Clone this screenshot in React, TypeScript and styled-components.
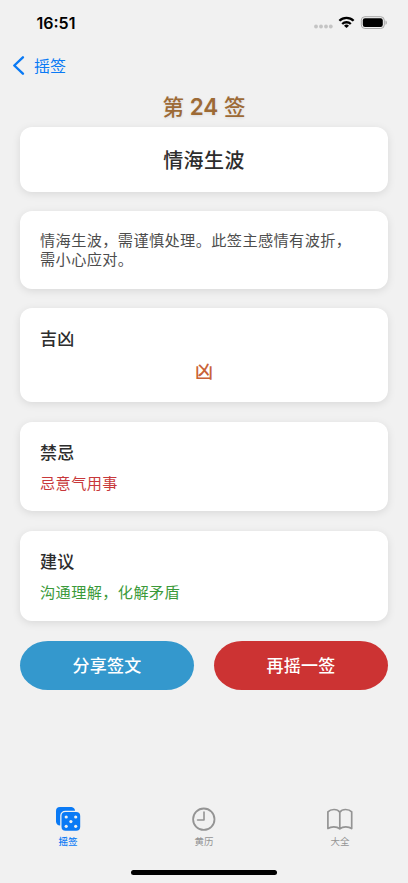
import React from 'react';
import styled, { createGlobalStyle } from 'styled-components';

const fontStack = 'Inter, "Noto Sans CJK SC", sans-serif';

const GlobalStyle = createGlobalStyle`
  * { box-sizing: border-box; }
  html, body { margin: 0; padding: 0; background: #f1f1f1; }
  body { font-family: ${fontStack}; }
`;

const Screen = styled.div`
  width: 408px;
  height: 883px;
  overflow: hidden;
  display: flex;
  flex-direction: column;
  background: #f1f1f1;
`;

const StatusBar = styled.header`
  height: 44px;
  flex: none;
  display: flex;
  justify-content: space-between;
  padding: 0 20px 0 36.5px;
`;

const Clock = styled.time`
  margin-top: 13px;
  font-size: 16px;
  line-height: 20px;
  font-weight: 600;
  color: #000;
`;

const StatusIcons = styled.div`
  display: flex;
  height: 44px;
`;

const NavBar = styled.nav`
  height: 43px;
  flex: none;
  padding-left: 12px;
`;

const BackButton = styled.button`
  height: 43px;
  padding: 0;
  border: 0;
  background: none;
  display: flex;
  align-items: center;
  gap: 9px;
  color: #0a7af5;
  font-family: ${fontStack};
  font-size: 16px;
  line-height: 20px;
`;

const Title = styled.h1`
  margin: 5px 0 0;
  height: 35px;
  flex: none;
  text-align: center;
  color: #9d6a35;
  font-size: 21.5px;
  line-height: 30px;
  font-weight: 500;
  text-shadow: 0 1px 3px rgba(0, 0, 0, 0.1);
`;

const TitleNumber = styled.span`
  font-size: 22.5px;
  font-weight: 600;
`;

const Content = styled.main`
  flex: 1;
  padding: 0 20px;
`;

const Card = styled.section<{ $height: number; $gap?: number }>`
  height: ${(p) => p.$height}px;
  margin-bottom: ${(p) => p.$gap ?? 20}px;
  padding: 20px;
  border-radius: 12px;
  background: #fff;
  box-shadow: 0 2px 9px rgba(0, 0, 0, 0.1);
`;

const PoemTitle = styled.h2`
  margin: 0;
  text-align: center;
  font-size: 20px;
  line-height: 28px;
  font-weight: 500;
  letter-spacing: 0.4px;
  color: #2d2d2d;
`;

const Heading = styled.h3`
  margin: 0;
  font-size: 17px;
  line-height: 22px;
  font-weight: 500;
  letter-spacing: 0.2px;
  color: #2d2d2d;
`;

const Body = styled.p<{ $color?: string; $top?: number }>`
  margin: ${(p) => p.$top ?? 0}px 0 0;
  font-size: 15.2px;
  line-height: 19px;
  letter-spacing: 0.38px;
  color: ${(p) => p.$color ?? '#4d4d4d'};
`;

const Fortune = styled.p`
  margin: 10px 0 0;
  text-align: center;
  font-size: 18px;
  line-height: 24px;
  font-weight: 500;
  color: #c96236;
`;

const Actions = styled.div`
  display: grid;
  grid-template-columns: 1fr 1fr;
  gap: 20px;
`;

const Action = styled.button<{ $color: string }>`
  height: 49px;
  padding: 0;
  border: 0;
  border-radius: 28px / 24.5px;
  background: ${(p) => p.$color};
  color: #fff;
  font-family: ${fontStack};
  font-size: 17px;
  line-height: 24px;
  font-weight: 500;
  letter-spacing: 0.3px;
`;

const TabBar = styled.footer`
  height: 62px;
  flex: none;
  padding-top: 5px;
  display: grid;
  grid-template-columns: repeat(3, 1fr);
`;

const Tab = styled.div<{ $active?: boolean }>`
  display: flex;
  flex-direction: column;
  align-items: center;
  color: ${(p) => (p.$active ? '#0a7af5' : '#949494')};
  font-size: 9.5px;
  line-height: 14px;
  font-weight: ${(p) => (p.$active ? 500 : 400)};
  svg { display: block; margin-bottom: 2px; }
`;

const HomeArea = styled.div`
  height: 21px;
  flex: none;
  display: flex;
  justify-content: center;
  padding-top: 8px;
`;

const HomeBar = styled.div`
  width: 146px;
  height: 5px;
  border-radius: 3px;
  background: #000;
`;

const SystemIcons = () => (
  <svg width="74" height="44" viewBox="314 0 74 44" fill="none">
    <g fill="#c4c4c4">
      <circle cx="316" cy="26.5" r="1.9" />
      <circle cx="321" cy="26.5" r="1.9" />
      <circle cx="326" cy="26.5" r="1.9" />
      <circle cx="330.8" cy="26.5" r="1.9" />
    </g>
    <g stroke="#000" strokeWidth="2.3">
      <path d="M339.4 20.8a10.1 10.1 0 0 1 14.2 0" />
      <path d="M342.2 24a6.2 6.2 0 0 1 8.6 0" />
    </g>
    <path d="M346.5 28.1 344 25.7a3.7 3.7 0 0 1 5 0z" fill="#000" />
    <rect x="361.3" y="16.7" width="23" height="11.8" rx="3.6" stroke="#a8a8a8" />
    <rect x="362.8" y="18.2" width="20" height="8.8" rx="2.2" fill="#000" />
    <path d="M385.5 20.6v4.1c.8-.3 1.3-1.1 1.3-2.05s-.5-1.75-1.3-2.05z" fill="#a8a8a8" />
  </svg>
);

const BackIcon = () => (
  <svg width="13" height="20" viewBox="0 0 13 20" fill="none">
    <path d="M10.9 1.3 2.3 9.5l8.6 8.2" stroke="currentColor" strokeWidth="2.4" strokeLinecap="round" strokeLinejoin="round" />
  </svg>
);

const DiceIcon = () => (
  <svg width="28" height="28" viewBox="54 805 28 28">
    <path d="M60 807h11.5a4 4 0 0 1 3.5 3.7H65.2a5 5 0 0 0-5 5v9.8a4 4 0 0 1-4.2-4V811a4 4 0 0 1 4-4z" fill="currentColor" />
    <rect x="61.5" y="812" width="18.7" height="18.8" rx="4" fill="currentColor" />
    <g fill="#f1f1f1">
      <circle cx="66.2" cy="817" r="1.6" />
      <circle cx="75.7" cy="817" r="1.6" />
      <circle cx="70.9" cy="821.6" r="1.6" />
      <circle cx="66.2" cy="826.3" r="1.6" />
      <circle cx="75.7" cy="826.3" r="1.6" />
    </g>
  </svg>
);

const ClockIcon = () => (
  <svg width="28" height="28" viewBox="190 805 28 28" fill="none" stroke="currentColor" strokeWidth="1.8">
    <circle cx="203.8" cy="819.2" r="10.7" />
    <path d="M204 812v8h-6.4" strokeWidth="1.6" strokeLinecap="round" strokeLinejoin="round" />
  </svg>
);

const BookIcon = () => (
  <svg width="28" height="28" viewBox="326 805 28 28" fill="none" stroke="currentColor" strokeWidth="1.7" strokeLinejoin="round">
    <path d="M339.8 812.2c-1.2-1.8-3.3-2.7-5.8-2.7-2.7 0-4.8.9-6.1 2.3v16.7c1.5-1.1 3.6-1.7 5.9-1.7 2.4 0 4.4.6 6 2 1.6-1.4 3.6-2 6-2 2.3 0 4.4.6 5.9 1.7v-16.7c-1.3-1.4-3.4-2.3-6.1-2.3-2.5 0-4.6.9-5.8 2.7zM339.8 812.2v16.6" />
  </svg>
);

export default function App() {
  return (
    <>
      <GlobalStyle />
      <Screen>
        <StatusBar>
          <Clock>16:51</Clock>
          <StatusIcons><SystemIcons /></StatusIcons>
        </StatusBar>
        <NavBar>
          <BackButton><BackIcon />摇签</BackButton>
        </NavBar>
        <Title>第 <TitleNumber>24</TitleNumber> 签</Title>
        <Content>
          <Card $height={65} $gap={19}>
            <PoemTitle>情海生波</PoemTitle>
          </Card>
          <Card $height={78} $gap={19}>
            <Body>情海生波，需谨慎处理。此签主感情有波折，<br />需小心应对。</Body>
          </Card>
          <Card $height={94}>
            <Heading>吉凶</Heading>
            <Fortune>凶</Fortune>
          </Card>
          <Card $height={89}>
            <Heading>禁忌</Heading>
            <Body $color="#c8383b" $top={10}>忌意气用事</Body>
          </Card>
          <Card $height={90}>
            <Heading>建议</Heading>
            <Body $color="#3a9a3a" $top={10}>沟通理解，化解矛盾</Body>
          </Card>
          <Actions>
            <Action $color="#3498cd">分享签文</Action>
            <Action $color="#cc3333">再摇一签</Action>
          </Actions>
        </Content>
        <TabBar>
          <Tab $active><DiceIcon />摇签</Tab>
          <Tab><ClockIcon />黄历</Tab>
          <Tab><BookIcon />大全</Tab>
        </TabBar>
        <HomeArea><HomeBar /></HomeArea>
      </Screen>
    </>
  );
}
